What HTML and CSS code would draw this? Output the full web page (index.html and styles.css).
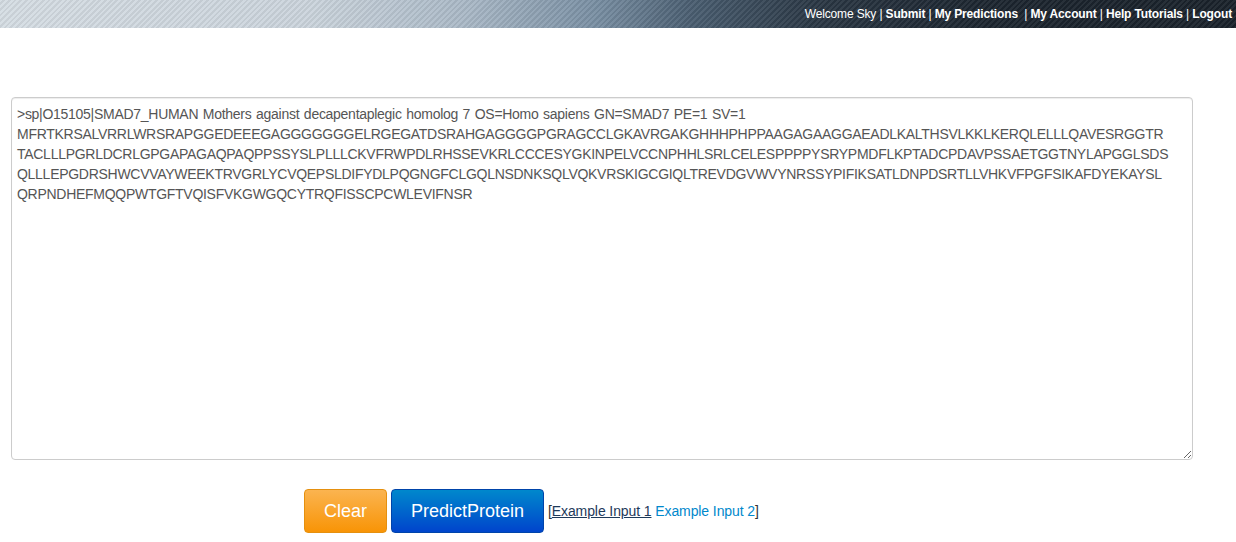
FILE: index.html
```html
<!DOCTYPE html>
<html>
<head>
<meta charset="utf-8">
<link rel="stylesheet" href="styles.css">
</head>
<body>
<div class="topbar">
  <div class="nav">
    <span class="welcome">Welcome Sky</span> | <a href="#">Submit</a> | <a href="#">My Predictions</a> &nbsp;| <a href="#">My Account</a> | <a href="#">Help Tutorials</a> | <a href="#">Logout</a>
  </div>
</div>
<main class="content">
  <textarea class="seq" spellcheck="false" wrap="off">&gt;sp|O15105|SMAD7_HUMAN Mothers against decapentaplegic homolog 7 OS=Homo sapiens GN=SMAD7 PE=1 SV=1
MFRTKRSALVRRLWRSRAPGGEDEEEGAGGGGGGGELRGEGATDSRAHGAGGGGPGRAGCCLGKAVRGAKGHHHPHPPAAGAGAAGGAEADLKALTHSVLKKLKERQLELLLQAVESRGGTR
TACLLLPGRLDCRLGPGAPAGAQPAQPPSSYSLPLLLCKVFRWPDLRHSSEVKRLCCCESYGKINPELVCCNPHHLSRLCELESPPPPYSRYPMDFLKPTADCPDAVPSSAETGGTNYLAPGGLSDS
QLLLEPGDRSHWCVVAYWEEKTRVGRLYCVQEPSLDIFYDLPQGNGFCLGQLNSDNKSQLVQKVRSKIGCGIQLTREVDGVWVYNRSSYPIFIKSATLDNPDSRTLLVHKVFPGFSIKAFDYEKAYSL
QRPNDHEFMQQPWTGFTVQISFVKGWGQCYTRQFISSCPCWLEVIFNSR</textarea>
  <div class="actions">
    <button class="btn btn-clear">Clear</button>
    <button class="btn btn-predict">PredictProtein</button>
    <span class="examples">[<a href="#" class="ex1">Example Input 1</a> <a href="#" class="ex2">Example Input 2</a>]</span>
  </div>
</main>
</body>
</html>
```
FILE: styles.css
```css
html, body {
  margin: 0;
  padding: 0;
  background: #fff;
  font-family: "Liberation Sans", Arial, sans-serif;
}
.topbar {
  height: 28px;
  background:
    repeating-linear-gradient(135deg, rgba(255,255,255,0.06) 0 2px, rgba(0,0,0,0.06) 2px 4px),
    linear-gradient(90deg, #d5dde3 0%, #ccd5dd 25%, #a9b8c6 38%, #7a90a4 48%, #4a5e71 56%, #2a3744 66%, #1c252f 80%, #1a222b 100%);
  display: flex;
  justify-content: flex-end;
  align-items: center;
}
.nav {
  color: #fff;
  font-size: 12px;
  letter-spacing: -0.15px;
  padding-right: 4px;
  white-space: nowrap;
  margin-top: -1px;
}
.nav a {
  color: #fff;
  font-weight: bold;
  text-decoration: none;
}
.content {
  padding: 69px 44px 0 11px;
}
.seq {
  display: block;
  box-sizing: border-box;
  width: 1182px;
  height: 363px;
  margin: 0;
  padding: 6px 6px 6px 5px;
  border: 1px solid #cccccc;
  border-radius: 4px;
  box-shadow: inset 0 1px 1px rgba(0,0,0,0.075);
  font-family: "Liberation Sans", Arial, sans-serif;
  font-size: 14px;
  letter-spacing: -0.28px;
  word-spacing: 1px;
  line-height: 20px;
  color: #555555;
  resize: both;
  overflow: hidden;
  white-space: pre;
  outline: none;
}
.actions {
  display: flex;
  align-items: center;
  margin-top: 29px;
  padding-left: 293px;
}
.btn {
  box-sizing: border-box;
  height: 44px;
  border-radius: 4px;
  font-family: "Liberation Sans", Arial, sans-serif;
  font-size: 18px;
  color: #fff;
  padding: 0;
  cursor: pointer;
}
.btn-clear {
  width: 83px;
  background: linear-gradient(180deg, #fbb450, #f89406);
  border: 1px solid #e5900f;
  margin-right: 4px;
}
.btn-predict {
  width: 153px;
  background: linear-gradient(180deg, #0088cc, #0044cc);
  border: 1px solid #0044aa;
  margin-right: 4px;
}
.examples {
  font-size: 14px;
  letter-spacing: -0.1px;
  color: #333;
}
.examples a {
  text-decoration: none;
}
.ex1 {
  color: #1e3a5a;
  text-decoration: underline !important;
}
.ex2 {
  color: #0088cc;
}
```
